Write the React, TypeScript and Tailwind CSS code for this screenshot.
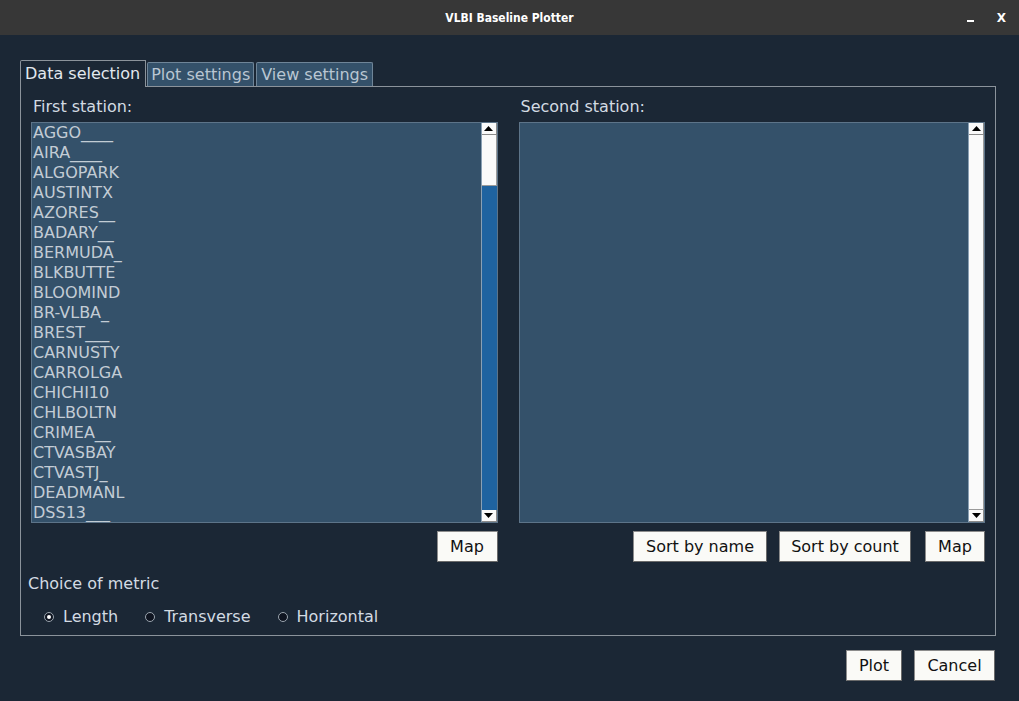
import { useState } from "react";

const STATIONS = [
  "AGGO____",
  "AIRA____",
  "ALGOPARK",
  "AUSTINTX",
  "AZORES__",
  "BADARY__",
  "BERMUDA_",
  "BLKBUTTE",
  "BLOOMIND",
  "BR-VLBA_",
  "BREST___",
  "CARNUSTY",
  "CARROLGA",
  "CHICHI10",
  "CHLBOLTN",
  "CRIMEA__",
  "CTVASBAY",
  "CTVASTJ_",
  "DEADMANL",
  "DSS13___",
];

const FONT = { fontFamily: '"DejaVu Sans", "Liberation Sans", sans-serif' };

function Arrow({ up }: { up?: boolean }) {
  return (
    <div className="h-[12px] w-full bg-[#fafafa] border-r border-b border-[#8a8a8a] flex items-center justify-center">
      <svg width="9" height="5" viewBox="0 0 9 5">
        <polygon points={up ? "4.5,0 9,5 0,5" : "0,0 9,0 4.5,5"} fill="#000" />
      </svg>
    </div>
  );
}

function Scrollbar({ full }: { full?: boolean }) {
  return (
    <div className="w-[16px] flex flex-col bg-[#1f63a0] border-l border-[#8aa0b4]">
      <Arrow up />
      {full ? (
        <div className="flex-1 bg-[#fafafa] border-r border-b border-[#9a9a9a]" />
      ) : (
        <>
          <div className="h-[51px] bg-[#fafafa] border-r border-b border-[#9a9a9a]" />
          <div className="flex-1" />
        </>
      )}
      <Arrow />
    </div>
  );
}

function Listbox({ items, full }: { items: string[]; full?: boolean }) {
  return (
    <div className="h-[401px] flex bg-[#34516a] border border-[#5d7489] overflow-hidden">
      <div className="flex-1 flex flex-col pl-[1px]">
        {items.map((s) => (
          <div key={s} className="h-[20px] leading-[20px] text-[16px] text-[#c3ccd5]">
            {s}
          </div>
        ))}
      </div>
      <Scrollbar full={full} />
    </div>
  );
}

function Btn({ label, w, extra = "" }: { label: string; w: string; extra?: string }) {
  return (
    <button
      className={`h-[31px] ${w} ${extra} bg-[#fafaf7] border border-[#8c8c8c] border-r-[#6a6a6a] border-b-[#6a6a6a] text-[16px] text-[#111] flex items-center justify-center`}
    >
      {label}
    </button>
  );
}

function Radio({ label, checked, onClick }: { label: string; checked: boolean; onClick: () => void }) {
  return (
    <button onClick={onClick} className="flex items-center gap-[9px] text-[16px] text-[#d3dbe3]">
      <span className="w-[10px] h-[10px] rounded-full bg-[#0e1420] border border-[#9aa4ae] flex items-center justify-center">
        {checked && <span className="w-[4px] h-[4px] rounded-full bg-white" />}
      </span>
      {label}
    </button>
  );
}

export default function App() {
  const [metric, setMetric] = useState("Length");
  const tabs = ["Data selection", "Plot settings", "View settings"];

  return (
    <div className="w-[1019px] h-[701px] flex flex-col bg-[#1b2735] overflow-hidden" style={FONT}>
      {/* Title bar */}
      <div className="h-[35px] bg-[#373737] flex items-center relative shrink-0">
        <div
          className="flex-1 text-center text-[13px] font-bold text-white"
          style={{ fontFamily: '"DejaVu Sans Condensed", "DejaVu Sans", sans-serif', transform: "scaleX(0.92)" }}
        >
          VLBI Baseline Plotter
        </div>
        <div className="absolute right-[13px] top-0 h-full flex items-center gap-[23px] text-white font-bold text-[12px]">
          <span className="w-[7px] h-[2px] bg-white mt-[6px]" />
          <span>X</span>
        </div>
      </div>

      <div className="flex-1 flex flex-col px-[20px] pt-[25px] pr-[23px]">
        {/* Tabs */}
        <div className="flex items-end h-[26px]">
          {tabs.map((t, i) => (
            <div
              key={t}
              className={
                i === 0
                  ? "h-[27px] px-[4px] pr-[5px] border border-b-0 border-[#8b939b] bg-[#1b2735] text-[16px] text-[#e2e8ee] flex items-center relative top-[1px] rounded-tl-[2px]"
                  : "h-[24px] px-[3px] ml-[1px] last:px-[4px] last:ml-[2px] border border-b-0 border-[#6f8598] bg-[#34516a] text-[16px] text-[#b9c6d2] flex items-center rounded-t-[2px]"
              }
            >
              {t}
            </div>
          ))}
        </div>

        {/* Panel */}
        <div className="h-[550px] border border-[#8b939b] flex flex-col px-[10px]">
          <div className="grid grid-cols-2 gap-[21px] pt-[8px]">
            <div className="flex flex-col">
              <div className="h-[27px] text-[16px] text-[#d3dbe3] pl-[2px]">First station:</div>
              <Listbox items={STATIONS} />
              <div className="flex justify-end mt-[8px]">
                <Btn label="Map" w="w-[61px]" />
              </div>
            </div>
            <div className="flex flex-col">
              <div className="h-[27px] text-[16px] text-[#d3dbe3] pl-[2px]">Second station:</div>
              <Listbox items={[]} full />
              <div className="flex justify-end gap-[12px] mt-[8px]">
                <Btn label="Sort by name" w="w-[134px]" />
                <Btn label="Sort by count" w="w-[132px]" />
                <Btn label="Map" w="w-[60px]" extra="ml-[2px]" />
              </div>
            </div>
          </div>
          <div className="text-[16px] text-[#d3dbe3] mt-[10px] -ml-[3px]">Choice of metric</div>
          <div className="flex items-center mt-[9px] ml-[13px] gap-[27px]">
            {["Length", "Transverse", "Horizontal"].map((m) => (
              <Radio key={m} label={m} checked={metric === m} onClick={() => setMetric(m)} />
            ))}
          </div>
        </div>

        {/* Bottom buttons */}
        <div className="flex justify-end gap-[12px] mt-[14px] pr-[1px]">
          <Btn label="Plot" w="w-[56px]" />
          <Btn label="Cancel" w="w-[81px]" />
        </div>
      </div>
    </div>
  );
}
